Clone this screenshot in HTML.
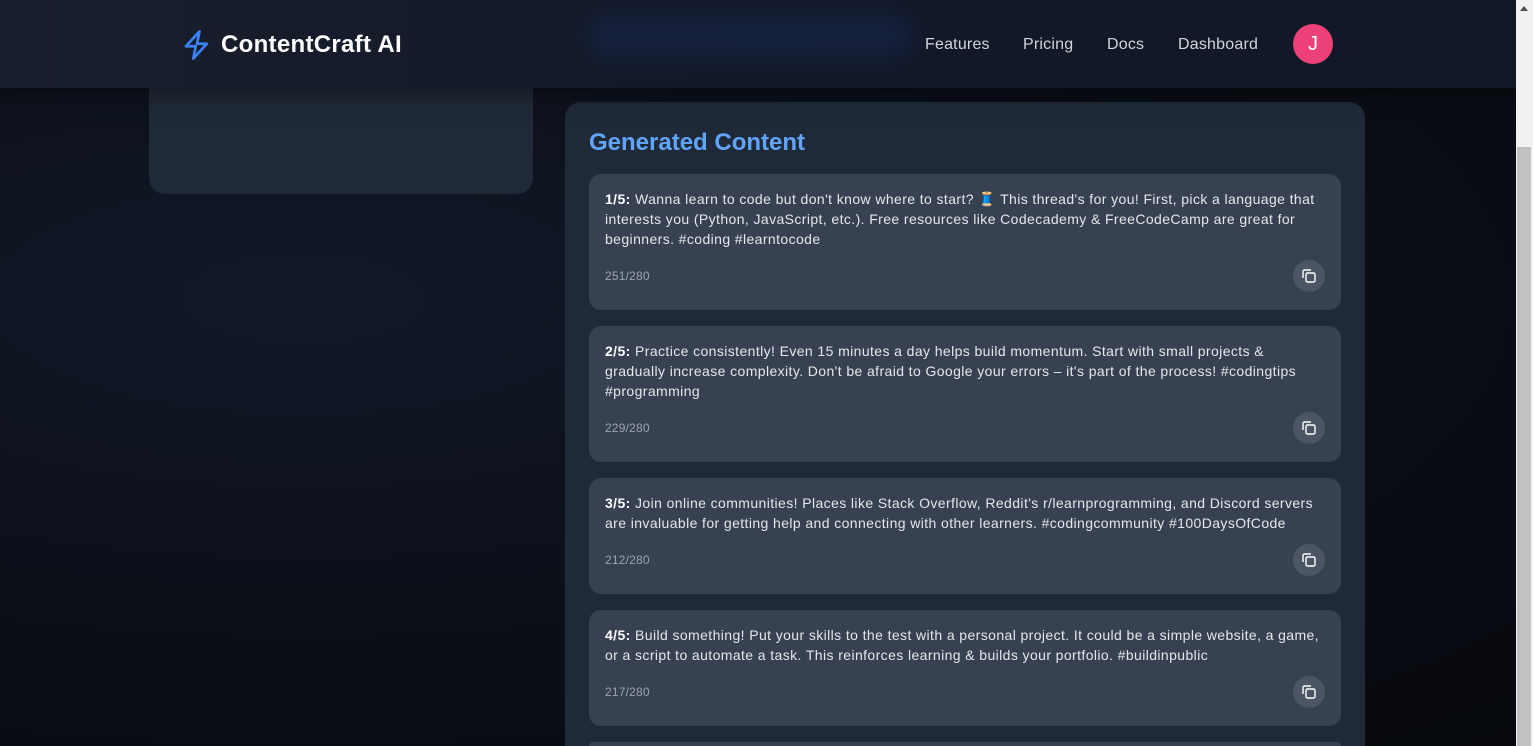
<!DOCTYPE html>
<html><head><meta charset="utf-8"><style>
*{box-sizing:border-box;margin:0;padding:0}
html,body{width:1533px;height:746px;overflow:hidden}
body{background:#0a0d14;font-family:"Liberation Sans","Noto Sans CJK SC",sans-serif;position:relative;color:#e5e7eb}
.bg{position:absolute;left:0;top:0;width:1516px;height:746px;background:radial-gradient(ellipse at 20% 40%,#111827 0%,#0b0f18 50%,#07090e 100%)}
.hdr{position:absolute;left:0;top:0;width:1516px;height:88px;background:linear-gradient(90deg,#1a1f2d,#121828 50%,#111726);box-shadow:0 4px 20px rgba(0,0,0,.5)}
.glow{position:absolute;left:590px;top:18px;width:320px;height:36px;background:#1a2b55;filter:blur(14px);opacity:.6}
.logo{position:absolute;left:182px;top:29px;display:flex;align-items:center;font-weight:bold;font-size:24px;color:#fff;letter-spacing:0.3px}
.logo svg{margin-right:9px}
.nav{position:absolute;top:36px;font-size:16px;color:#d1d5db;letter-spacing:0.2px}
.av{position:absolute;left:1293px;top:24px;width:40px;height:40px;border-radius:50%;background:#ec4079;color:#fff;font-size:20px;text-align:center;line-height:40px}
.left{position:absolute;left:149px;top:88px;width:384px;height:106px;background:#1f2937;border-radius:0 0 16px 16px}
.wrap{position:absolute;left:0;top:0;width:1516px;height:746px;overflow:hidden}
.main{position:absolute;left:565px;top:102px;width:800px;height:644px;background:#1f2937;border-radius:16px 16px 0 0}
h2{position:absolute;left:24px;top:27px;font-size:24px;color:#60a5fa;font-weight:bold}
.it{position:absolute;left:24px;width:752px;background:#374151;border-radius:12px;padding:15px 16px;font-size:14px;line-height:20px;color:#e5e7eb;letter-spacing:0.4px}
.it b{color:#fff}
.cnt{position:absolute;left:16px;font-size:12px;color:#9ca3af;letter-spacing:0.2px}
.cp{position:absolute;right:16px;width:32px;height:32px;border-radius:50%;background:#4b5563;display:flex;align-items:center;justify-content:center}
.sb{position:absolute;left:1516px;top:0;width:17px;height:746px;background:#f1f1f1}
.th{position:absolute;left:1517px;top:147px;width:14px;height:599px;background:#c1c1c1}
</style></head><body>
<div class="wrap">
<div class="bg"></div>
<div class="left"></div>
<div class="main">
<h2>Generated Content</h2>
<div class="it" style="top:72px;height:136px"><b>1/5:</b> Wanna learn to code but don't know where to start? 🧵 This thread's for you! First, pick a language that interests you (Python, JavaScript, etc.). Free resources like Codecademy &amp; FreeCodeCamp are great for beginners. #coding #learntocode
<div class="cnt" style="top:92px">251/280</div><div class="cp" style="top:86px"><svg width="16" height="16" viewBox="0 0 16 16" fill="none" stroke="#fff" stroke-width="1.4"><rect x="5" y="5" width="9" height="9" rx="1.5"/><path d="M2 10V3.5A1.5 1.5 0 0 1 3.5 2H10"/></svg></div></div>
<div class="it" style="top:224px;height:136px"><b>2/5:</b> Practice consistently! Even 15 minutes a day helps build momentum. Start with small projects &amp; gradually increase complexity. Don't be afraid to Google your errors – it's part of the process! #codingtips #programming
<div class="cnt" style="top:92px">229/280</div><div class="cp" style="top:86px"><svg width="16" height="16" viewBox="0 0 16 16" fill="none" stroke="#fff" stroke-width="1.4"><rect x="5" y="5" width="9" height="9" rx="1.5"/><path d="M2 10V3.5A1.5 1.5 0 0 1 3.5 2H10"/></svg></div></div>
<div class="it" style="top:376px;height:116px"><b>3/5:</b> Join online communities! Places like Stack Overflow, Reddit's r/learnprogramming, and Discord servers are invaluable for getting help and connecting with other learners. #codingcommunity #100DaysOfCode
<div class="cnt" style="top:72px">212/280</div><div class="cp" style="top:66px"><svg width="16" height="16" viewBox="0 0 16 16" fill="none" stroke="#fff" stroke-width="1.4"><rect x="5" y="5" width="9" height="9" rx="1.5"/><path d="M2 10V3.5A1.5 1.5 0 0 1 3.5 2H10"/></svg></div></div>
<div class="it" style="top:508px;height:116px"><b>4/5:</b> Build something! Put your skills to the test with a personal project. It could be a simple website, a game, or a script to automate a task. This reinforces learning &amp; builds your portfolio. #buildinpublic
<div class="cnt" style="top:72px">217/280</div><div class="cp" style="top:66px"><svg width="16" height="16" viewBox="0 0 16 16" fill="none" stroke="#fff" stroke-width="1.4"><rect x="5" y="5" width="9" height="9" rx="1.5"/><path d="M2 10V3.5A1.5 1.5 0 0 1 3.5 2H10"/></svg></div></div>
<div style="position:absolute;left:24px;top:640px;width:752px;height:4px;background:#374151;border-radius:12px 12px 0 0"></div>
</div>
<div class="hdr"><div class="glow"></div>
<div class="logo"><svg width="30" height="32" viewBox="0 0 24 26" fill="none" stroke="#3b82f6" stroke-width="2.2" stroke-linejoin="round" stroke-linecap="round"><path d="M14 2L3 14h8l-2 10 11-12h-8z"/></svg>ContentCraft AI</div>
<div class="nav" style="left:925px">Features</div>
<div class="nav" style="left:1023px">Pricing</div>
<div class="nav" style="left:1107px">Docs</div>
<div class="nav" style="left:1178px">Dashboard</div>
<div class="av">J</div>
</div>
</div>
<div class="sb"></div><div class="th"></div>
<div style="position:absolute;left:1520px;top:6px;width:0;height:0;border:4px solid transparent;border-bottom:5px solid #505050;border-top:0"></div>
</body></html>
